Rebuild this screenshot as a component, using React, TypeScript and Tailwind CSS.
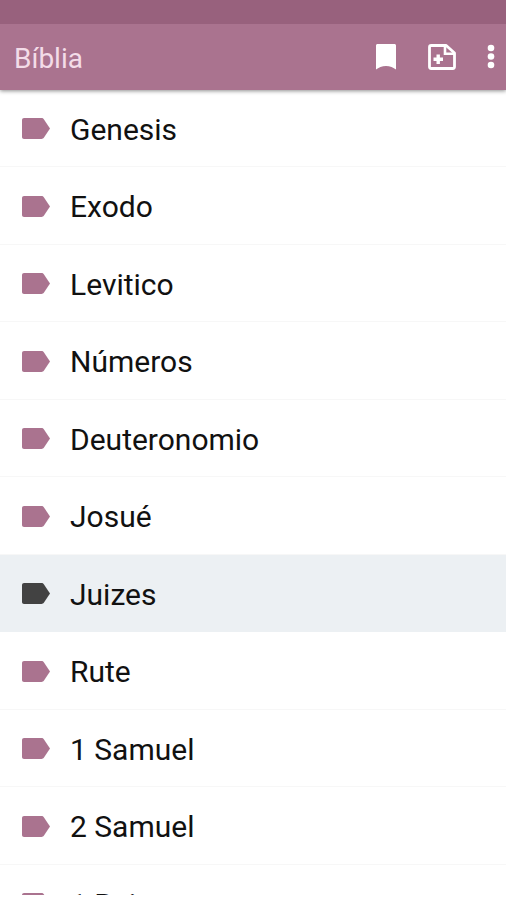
import React from "react";

const books = [
  "Genesis",
  "Exodo",
  "Levitico",
  "Números",
  "Deuteronomio",
  "Josué",
  "Juizes",
  "Rute",
  "1 Samuel",
  "2 Samuel",
  "1 Reis",
];

const selectedBook = "Juizes";

const TagIcon: React.FC<{ className: string }> = ({ className }) => (
  <svg viewBox="0 0 28 21" className={`w-7 h-[21px] shrink-0 fill-current ${className}`} aria-hidden="true">
    <path d="M2 0H19.5C20.5 0 21.3.5 21.8 1.2L28 10.5 21.8 19.8C21.3 20.5 20.5 21 19.5 21H2C.9 21 0 20.1 0 19V2C0 .9.9 0 2 0Z" />
  </svg>
);

const Toolbar: React.FC = () => (
  <header className="relative shrink-0 shadow-[0_1px_4px_rgba(0,0,0,0.45)]">
    <div className="h-6 bg-[#98617d]" />
    <div className="flex items-center justify-between h-[66px] pl-[14px] pr-[11px] bg-[#aa738f] text-white">
      <h1 className="text-[28px] leading-8 pt-1 font-normal text-[#f3dce8]">Bíblia</h1>
      <div className="flex items-center">
        <button className="mr-8" aria-label="Marcadores">
          <svg viewBox="0 0 20 26" className="w-5 h-[26px] fill-current" aria-hidden="true">
            <path d="M1.5 0H18.5C19.3 0 20 .7 20 1.5V25.5C17.5 23.8 14 22 10 22S2.5 23.8 0 25.5V1.5C0 .7.7 0 1.5 0Z" />
          </svg>
        </button>
        <button className="mr-[31px]" aria-label="Adicionar nota">
          <svg viewBox="0 0 28 26" className="w-7 h-[26px]" fill="none" aria-hidden="true">
            <path
              d="M3.2 1.5H18.2L26.5 9V22.8C26.5 23.8 25.8 24.5 24.8 24.5H3.2C2.2 24.5 1.5 23.8 1.5 22.8V3.2C1.5 2.2 2.2 1.5 3.2 1.5Z"
              stroke="currentColor"
              strokeWidth="2.8"
              strokeLinejoin="round"
            />
            <path d="M17 2V9.8H26" stroke="currentColor" strokeWidth="2.6" />
            <path d="M10.2 10.5V20M5.5 15.2H15" stroke="currentColor" strokeWidth="3.4" />
          </svg>
        </button>
        <button aria-label="Mais opções">
          <svg viewBox="0 0 8 26" className="w-2 h-[26px] fill-current" aria-hidden="true">
            <circle cx="4" cy="4" r="3.3" />
            <circle cx="4" cy="12.5" r="3.3" />
            <circle cx="4" cy="21" r="3.3" />
          </svg>
        </button>
      </div>
    </div>
  </header>
);

const App: React.FC = () => {
  return (
    <div className="flex flex-col h-screen pb-[5px] bg-white font-['Roboto',sans-serif]">
      <Toolbar />
      <main className="flex-1 min-h-0 overflow-hidden">
        <ul>
          {books.map((book) => {
            const selected = book === selectedBook;
            return (
              <li key={book} className="odd:h-[77px] even:h-[78px]">
                <a
                  href="#"
                  aria-current={selected ? "true" : undefined}
                  className={`flex items-center gap-5 h-full pl-[22px] pt-px border-b ${
                    selected ? "bg-[#ecf0f3] border-[#ecf0f3]" : "border-[#f7f7f7]"
                  }`}
                >
                  <TagIcon className={selected ? "text-[#424242]" : "text-[#aa738f]"} />
                  <span className="text-[30px] leading-9 pt-0.5 font-normal text-[#111111]">{book}</span>
                </a>
              </li>
            );
          })}
        </ul>
      </main>
    </div>
  );
};

export default App;
